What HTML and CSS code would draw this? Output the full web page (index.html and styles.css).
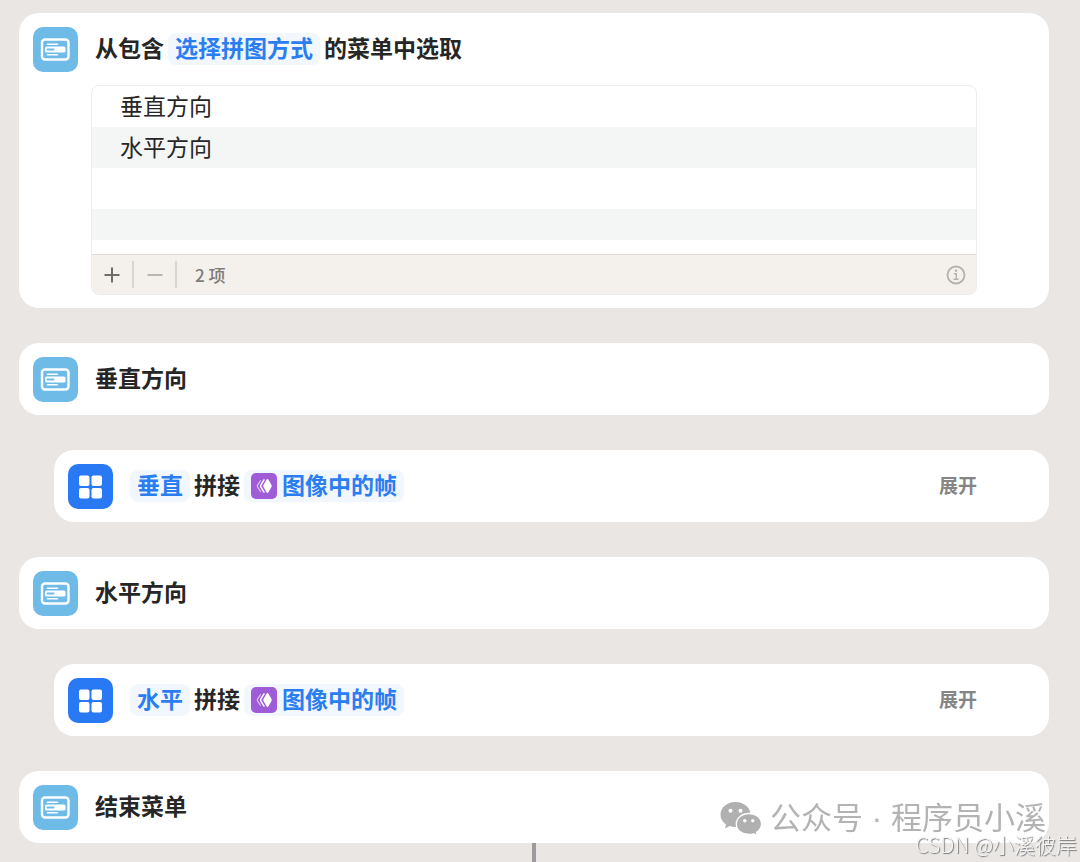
FILE: index.html
```html
<!DOCTYPE html>
<html lang="zh-CN">
<head>
  <meta charset="UTF-8">
  <meta name="viewport" content="width=device-width, initial-scale=1.0">
  <title>选择拼图方式</title>
  <link rel="stylesheet" href="styles.css">
</head>
<body>

  <!-- shared icons -->
  <svg class="sprite" aria-hidden="true">
    <symbol id="icon-menu" viewBox="0 0 45 45">
      <rect x="9" y="12.500" width="26.500" height="20" rx="3" fill="none" stroke="#fff" stroke-width="2.400"/>
      <path d="M14.500 17.300h10M14.500 27.700h10" stroke="#fff" stroke-width="1.600" stroke-linecap="round"/>
      <rect x="12" y="19.400" width="20.500" height="6.200" rx="1.500" fill="#fff"/>
      <path d="M14.500 22.500h6" stroke="#6fbbe8" stroke-width="2" stroke-linecap="round"/>
    </symbol>
    <symbol id="icon-grid" viewBox="0 0 45 45">
      <g fill="#fff">
        <rect x="11" y="11.500" width="10.500" height="10.500" rx="2"/>
        <rect x="23.500" y="11.500" width="10.500" height="10.500" rx="2"/>
        <rect x="11" y="24" width="10.500" height="10.500" rx="2"/>
        <rect x="23.500" y="24" width="10.500" height="10.500" rx="2"/>
      </g>
    </symbol>
    <symbol id="icon-frames" viewBox="0 0 26 26">
      <rect width="26" height="26" rx="5" fill="#a05bd6"/>
      <path d="M16.500 6q.6 0 1 .8l3 5.100q.6 1.100 0 2.200l-3 5.100q-.4.8-1 .8t-1-.8l-3-5.100q-.6-1.100 0-2.200l3-5.100q.4-.8 1-.8z" fill="#fff"/>
      <path d="M13 6.800l-3.200 5.200q-.5 1 0 2l3.200 5.200" fill="none" stroke="#fff" stroke-width="1.500" stroke-linecap="round"/>
      <path d="M9.500 7.600l-3 4.500q-.5.900 0 1.800l3 4.500" fill="none" stroke="#e0c4f2" stroke-width="1.100" stroke-linecap="round"/>
    </symbol>
  </svg>

  <main class="workflow">
    <section class="card">
      <div class="card-row">
        <svg class="icon icon-light"><use href="#icon-menu"/></svg>
        <h2 class="title">从包含<button class="chip">选择拼图方式</button>的菜单中选取</h2>
      </div>
      <div class="list">
        <ul class="items">
          <li>垂直方向</li>
          <li>水平方向</li>
          <li></li>
          <li></li>
          <li></li>
        </ul>
        <div class="toolbar">
          <button class="tool" aria-label="添加">
            <svg width="16" height="16" viewBox="0 0 16 16"><path d="M8 .5v15M.5 8h15" stroke="#6f6b68" stroke-width="2"/></svg>
          </button>
          <button class="tool" aria-label="移除">
            <svg width="16" height="16" viewBox="0 0 16 16"><path d="M.5 8h15" stroke="#b9b5b1" stroke-width="2"/></svg>
          </button>
          <span class="count">2 项</span>
          <button class="info" aria-label="信息">
            <svg width="20" height="20" viewBox="0 0 20 20" fill="none" stroke="#b5b1ad">
              <circle cx="10" cy="10" r="8.500" stroke-width="1.800"/>
              <path d="M8 8.800h2.300v5M7.500 14.200h5" stroke-width="1.400"/>
              <circle cx="10" cy="5.800" r="1.200" fill="#b5b1ad" stroke="none"/>
            </svg>
          </button>
        </div>
      </div>
    </section>

    <section class="card">
      <div class="card-row">
        <svg class="icon icon-light"><use href="#icon-menu"/></svg>
        <h2 class="title">垂直方向</h2>
      </div>
    </section>

    <section class="card nested">
      <div class="card-row">
        <svg class="icon icon-blue"><use href="#icon-grid"/></svg>
        <h2 class="title"><button class="chip">垂直</button>拼接<button class="chip"><svg class="chip-icon"><use href="#icon-frames"/></svg>图像中的帧</button></h2>
        <button class="expand">展开</button>
      </div>
    </section>

    <section class="card">
      <div class="card-row">
        <svg class="icon icon-light"><use href="#icon-menu"/></svg>
        <h2 class="title">水平方向</h2>
      </div>
    </section>

    <section class="card nested">
      <div class="card-row">
        <svg class="icon icon-blue"><use href="#icon-grid"/></svg>
        <h2 class="title"><button class="chip">水平</button>拼接<button class="chip"><svg class="chip-icon"><use href="#icon-frames"/></svg>图像中的帧</button></h2>
        <button class="expand">展开</button>
      </div>
    </section>

    <section class="card">
      <div class="card-row">
        <svg class="icon icon-light"><use href="#icon-menu"/></svg>
        <h2 class="title">结束菜单</h2>
      </div>
    </section>
  </main>
  <div class="connector"></div>

  <div class="account">
    <svg width="42" height="34" viewBox="0 0 42 34">
      <path d="M15.500 0C7 0 .5 5.700.5 12.700c0 4 2.200 7.400 5.500 9.700l-1 4 4.700-2.400c1.800.6 3.700.9 5.800.9C24 24.900 30.500 19.700 30.500 12.700S24 0 15.500 0z" fill="#b0b0b0"/>
      <path d="M29 11.500c-7.200 0-12.700 4.600-12.700 10.600S21.800 32.500 29 32.500c1.700 0 3.200-.2 4.600-.7l3.700 2-.8-3.400c3.100-2 5-4.900 5-8.300 0-6-5.300-10.600-12.500-10.600z" fill="#b0b0b0" stroke="#fff" stroke-width="1.300"/>
      <g fill="#fff">
        <circle cx="10.500" cy="8.700" r="2"/>
        <circle cx="20.500" cy="8.700" r="2"/>
        <circle cx="24.800" cy="18.700" r="1.700"/>
        <circle cx="32.800" cy="18.700" r="1.700"/>
      </g>
    </svg>
    <span>公众号</span><span class="dot">·</span><span>程序员小溪</span>
  </div>
  <div class="credit">CSDN @小溪彼岸</div>

</body>
</html>
```
FILE: styles.css
```css
* {
  box-sizing: border-box;
}
body {
  margin: 0;
  padding: 13px 31px 0 19px;
  background-color: #e9e6e3;
  font-family: "Liberation Sans", "Noto Sans CJK SC", sans-serif;
  color: #262626;
}
button {
  border: none;
  padding: 0;
  background: none;
  font: inherit;
  color: inherit;
  cursor: pointer;
}
.sprite {
  position: absolute;
  width: 0;
  height: 0;
}
.workflow {
  display: flex;
  flex-direction: column;
  gap: 35px;
}
.card {
  padding: 14px 14px 13px;
  background: #fff;
  border-radius: 20px;
}
.nested {
  margin-left: 35px;
}
.card-row {
  display: flex;
  align-items: center;
  gap: 17px;
}
.icon {
  flex: none;
  width: 45px;
  height: 45px;
  border-radius: 10px;
}
.icon-light {
  background: #6fbbe8;
}
.icon-blue {
  background: #2879f3;
}
.title {
  display: flex;
  align-items: center;
  gap: 4px;
  margin: 0;
  padding-bottom: 2px;
  font-size: 23px;
  font-weight: 700;
  line-height: 32px;
  white-space: nowrap;
}
.chip {
  display: flex;
  align-items: center;
  gap: 5px;
  padding: 0 7px;
  border-radius: 8px;
  background: #f2f7fe;
  color: #2b7df2;
}
.chip-icon {
  width: 26px;
  height: 26px;
}
.expand {
  margin-left: auto;
  margin-right: 58px;
  padding-bottom: 4px;
  font-size: 19px;
  font-weight: 700;
  color: #858585;
}

/* menu options */
.list {
  margin: 13px 58px 0;
  border: 1px solid #efedec;
  border-radius: 8px;
  overflow: hidden;
}
.items {
  margin: 0;
  padding: 0;
  list-style: none;
  font-size: 23px;
  line-height: 43px;
}
.items li {
  height: 41px;
  padding-left: 28px;
}
.items li:nth-child(even) {
  background: #f4f5f5;
}
.items li:nth-child(4) {
  height: 31px;
}
.items li:nth-child(5) {
  height: 14px;
}
.toolbar {
  display: flex;
  align-items: center;
  height: 40px;
  padding-right: 10px;
  border-top: 1px solid #dfdcd9;
  background: #f4f0ec;
}
.tool {
  display: flex;
  align-items: center;
  justify-content: center;
  width: 43px;
  height: 27px;
  border-right: 2px solid #d9d5d1;
}
.tool:first-child {
  width: 42px;
}
.count {
  margin-left: 18px;
  font-family: "Noto Sans CJK SC", sans-serif;
  font-size: 17px;
  font-weight: 500;
  line-height: 24px;
  color: #7f7b78;
}
.info {
  display: flex;
  margin-left: auto;
}

.connector {
  width: 4px;
  height: 19px;
  margin: 0 auto;
  background: #9b9a9d;
}

/* watermarks */
.account {
  position: fixed;
  right: 34px;
  bottom: 23px;
  display: flex;
  align-items: center;
  font-size: 31px;
  font-weight: 400;
  line-height: 40px;
  color: #b3b3b3;
}
.account svg {
  margin-right: 8px;
}
.dot {
  width: 28px;
  text-align: center;
}
.credit {
  position: fixed;
  right: 3px;
  bottom: 4px;
  font-size: 21px;
  font-weight: 300;
  line-height: 28px;
  font-family: "Noto Sans CJK SC", sans-serif;
  color: #f4f4f4;
  text-shadow: 1px 1px 1px #777;
}
```
